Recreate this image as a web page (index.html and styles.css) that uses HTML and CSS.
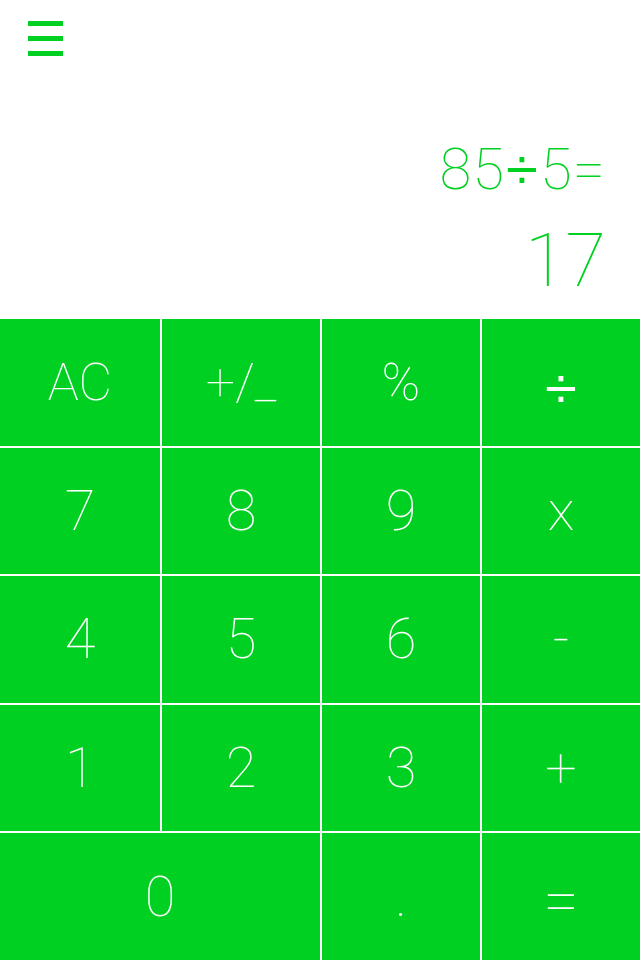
FILE: index.html
```html
<!DOCTYPE html>
<html>
    <head>
        <title>Calculator</title>
        <meta charset="UTF-8">
        <meta name="viewport" content="width=device-width, initial-scale=1.0">
        <link rel="stylesheet" href="styles.css">
    </head>
    <body>
        <div class="screen">
            <header class="top">
                <div class="menu">
                    <span></span>
                    <span></span>
                    <span></span>
                </div>
                <div class="display">
                    <div class="expr">85<span class="op">÷</span>5=</div>
                    <div class="result">17</div>
                </div>
            </header>
            <section class="keys">
                <div class="key small">AC</div>
                <div class="key small">+/_</div>
                <div class="key small">%</div>
                <div class="key"><span class="divide">÷</span></div>
                <div class="key">7</div>
                <div class="key">8</div>
                <div class="key">9</div>
                <div class="key">x</div>
                <div class="key">4</div>
                <div class="key">5</div>
                <div class="key">6</div>
                <div class="key">-</div>
                <div class="key">1</div>
                <div class="key">2</div>
                <div class="key">3</div>
                <div class="key">+</div>
                <div class="key zero">0</div>
                <div class="key">.</div>
                <div class="key"><span class="equals">=</span></div>
            </section>
        </div>
    </body>
</html>
```

FILE: styles.css
```css
* {
    box-sizing: border-box;
}

body {
    margin: 0;
    background: #fff;
    font-family: 'Roboto', 'Liberation Sans', sans-serif;
    font-weight: 100;
}

.screen {
    width: 640px;
    height: 960px;
    display: flex;
    flex-direction: column;
}

/* top part with menu and display */
.top {
    height: 319px;
    padding: 21px 34px 0 28px;
    display: flex;
    flex-direction: column;
}

.menu {
    width: 35px;
    display: flex;
    flex-direction: column;
    gap: 10px;
}

.menu span {
    display: block;
    height: 5px;
    background: #00d021;
}

.display {
    text-align: right;
    color: #00d021;
}

.expr {
    font-size: 58px;
    line-height: 70px;
    margin-top: 78px;
    letter-spacing: 1px;
}

/* the thin font has a tiny divide sign, so take it from Arial metrics */
.expr .op {
    font-family: 'Liberation Sans', sans-serif;
    font-weight: normal;
    font-size: 58px;
    line-height: 0;
    margin: 0 1px;
}

.result {
    font-size: 74px;
    line-height: 90px;
    margin-top: 12px;
}

/* keypad */
.keys {
    flex: 1;
    display: grid;
    grid-template-columns: 160px 1fr 1fr 1fr;
    grid-template-rows: repeat(5, 1fr);
    gap: 2px;
    background: #fff;
}

.key {
    background: #00d021;
    color: #fff;
    font-size: 56px;
    display: flex;
    align-items: center;
    justify-content: center;
}

.key.small {
    font-size: 52px;
}

.key .divide {
    font-family: 'Liberation Sans', sans-serif;
    font-weight: normal;
    font-size: 58px;
    line-height: 1;
    margin-top: 12px;
}

.key .equals {
    font-size: 64px;
    line-height: 1;
    margin-top: 10px;
}

.key.zero {
    grid-column: span 2;
}
```
